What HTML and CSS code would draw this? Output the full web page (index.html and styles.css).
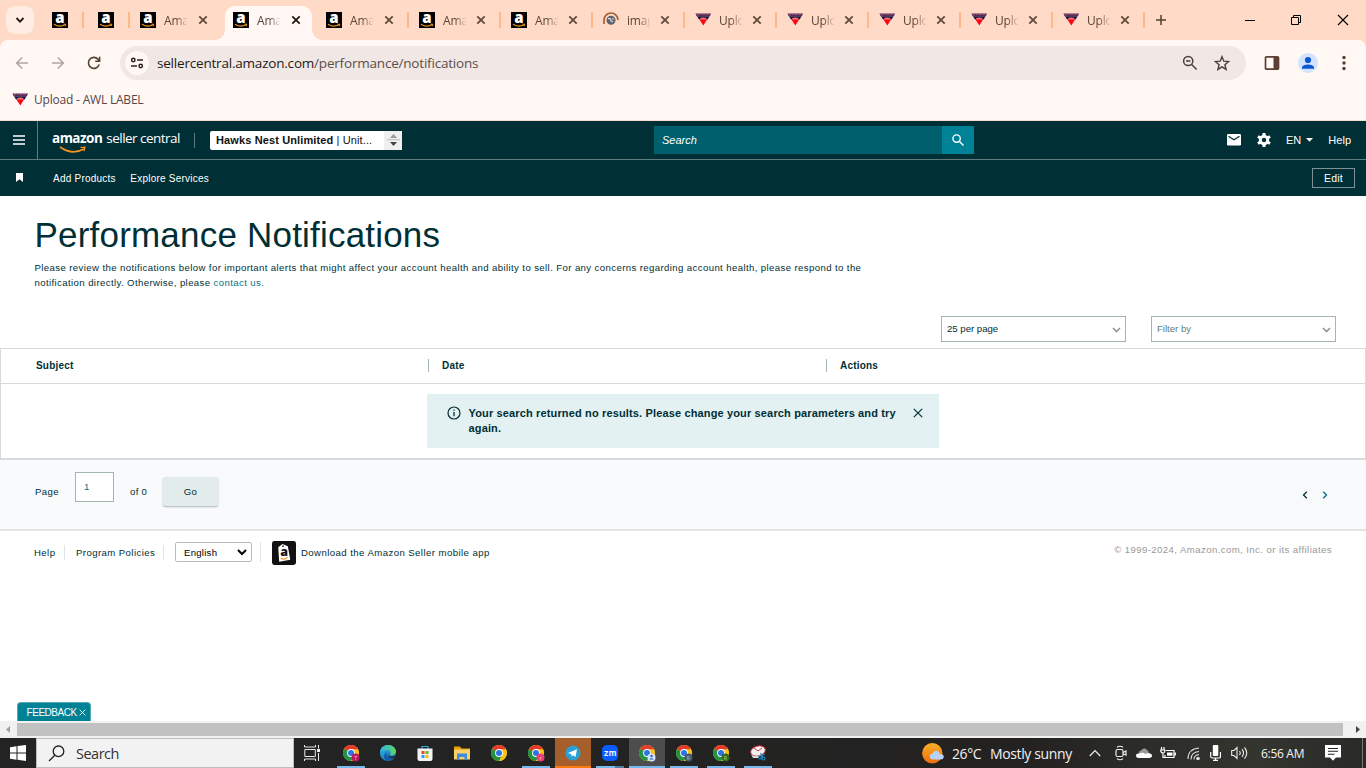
FILE: index.html
```
<!DOCTYPE html>
<html lang="en">
<head>
<meta charset="utf-8">
<title>Performance Notifications</title>
<link rel="stylesheet" href="styles.css">
</head>
<body>
<svg class="defs" aria-hidden="true">
  <defs>
    <linearGradient id="edgeBlue" x1="0" y1="0" x2="1" y2="1"><stop offset="0" stop-color="#35c1f1"/><stop offset="1" stop-color="#0c59a4"/></linearGradient>
    <linearGradient id="edgeGreen" x1="0" y1="0" x2="1" y2="0"><stop offset="0" stop-color="#2bb8e8"/><stop offset="1" stop-color="#5fd460"/></linearGradient>
    <linearGradient id="sun" x1="0" y1="0" x2="0" y2="1"><stop offset="0" stop-color="#f9b024"/><stop offset="1" stop-color="#ee6c12"/></linearGradient>
  </defs>
  <symbol id="amz" viewBox="0 0 16 16"><rect width="16" height="16" fill="#000"/><text x="3.3" y="11" font-family="Open Sans, sans-serif" font-weight="800" font-size="15" fill="#fff">a</text><path d="M2 12.2Q7.500 15.800 13 12.800" fill="none" stroke="#f79a1c" stroke-width="1.200"/><path d="M11.500 12.200h2.300l-.6 2" fill="none" stroke="#f79a1c"/></symbol>
  <symbol id="awl" viewBox="0 0 16 16"><path d="M.5 1.500h15.500l-1.200 2.700H1.700z" fill="#5c2a58"/><path d="M2 2.600h2m1-.4h2m1 .4h2m1-.4h3" stroke="#b9808a" stroke-width=".6"/><path d="M2 4.200h12.500l-1.800 3.200H4z" fill="#1c1440"/><path d="M5 6.200q3.300-1.500 6.500 0l-.5 2H5.600z" fill="#f5707a"/><path d="M4.500 7.400h7.600L8.300 13.500z" fill="#fb0714"/></symbol>
  <symbol id="close" viewBox="0 0 10 10"><path d="M1.300 1.300l7.400 7.400M8.700 1.300L1.300 8.700" fill="none" stroke="currentColor" stroke-width="1.800"/></symbol>
  <symbol id="chrome" viewBox="0 0 16 16"><circle cx="8" cy="8" r="8" fill="#fbc116"/><path d="M8 8L1.070 4A8 8 0 0 1 14.930 4z" fill="#e33b2e"/><path d="M8 8L1.070 4A8 8 0 0 0 8 16l3.500-6z" fill="#229342"/><path d="M8 4.300h6.900A8 8 0 0 1 8 16l3.300-6z" fill="#fbc116"/><circle cx="8" cy="8" r="3.900" fill="#fff"/><circle cx="8" cy="8" r="3" fill="#2a74e4"/></symbol>
</svg>

<header class="tabstrip">
  <div class="tab-search"><svg width="10" height="10" viewBox="0 0 10 10"><path d="M1.500 3l3.500 3.600L8.500 3" fill="none" stroke="#27180f" stroke-width="1.800"/></svg></div>
  <div class="pinned"><svg class="fav"><use href="#amz"/></svg></div>
  <div class="pinned"><svg class="fav"><use href="#amz"/></svg></div>
  <div class="tab wide plain"><svg class="fav"><use href="#amz"/></svg><span>Ama</span><svg class="x"><use href="#close"/></svg></div>
  <div class="tab wide active"><svg class="fav"><use href="#amz"/></svg><span>Ama</span><svg class="x"><use href="#close"/></svg></div>
  <div class="tab wide"><svg class="fav"><use href="#amz"/></svg><span>Ama</span><svg class="x"><use href="#close"/></svg></div>
  <div class="tab"><svg class="fav"><use href="#amz"/></svg><span>Ama</span><svg class="x"><use href="#close"/></svg></div>
  <div class="tab"><svg class="fav"><use href="#amz"/></svg><span>Ama</span><svg class="x"><use href="#close"/></svg></div>
  <div class="tab"><svg class="fav" viewBox="0 0 16 16"><path d="M1 12V8a7 7 0 0 1 14 0" fill="none" stroke="#a45f2e" stroke-width="1.700"/><circle cx="8" cy="8.200" r="4.500" fill="#5b6470"/><path d="M5 6.500l2.500.3.500 2 2 1M9.500 6l1 1.500" fill="none" stroke="#d9d5d3" stroke-width="1.300"/></svg><span>imag</span><svg class="x"><use href="#close"/></svg></div>
  <div class="tab"><svg class="fav"><use href="#awl"/></svg><span>Uplo</span><svg class="x"><use href="#close"/></svg></div>
  <div class="tab"><svg class="fav"><use href="#awl"/></svg><span>Uplo</span><svg class="x"><use href="#close"/></svg></div>
  <div class="tab"><svg class="fav"><use href="#awl"/></svg><span>Uplo</span><svg class="x"><use href="#close"/></svg></div>
  <div class="tab"><svg class="fav"><use href="#awl"/></svg><span>Uplo</span><svg class="x"><use href="#close"/></svg></div>
  <div class="tab"><svg class="fav"><use href="#awl"/></svg><span>Uplo</span><svg class="x"><use href="#close"/></svg></div>
  <svg class="new-tab" width="12" height="12" viewBox="0 0 12 12"><path d="M6 1v10M1 6h10" stroke="#54402f" stroke-width="1.500"/></svg>
  <div class="win-controls">
    <svg width="10" height="12" viewBox="0 0 10 12"><path d="M0 6.500h10" stroke="#000"/></svg>
    <svg width="12" height="12" viewBox="0 0 12 12"><path d="M1.500 3.500h7v7h-7zM3.500 3.500v-2h7v7h-2" fill="none" stroke="#000"/></svg>
    <svg width="12" height="12" viewBox="0 0 12 12"><path d="M1 1l10 10M11 1L1 11" stroke="#000" stroke-width="1.100"/></svg>
  </div>
</header>

<div class="bars-wrap">
<div class="chrome-bars">
  <div class="toolbar">
    <svg class="nav-icon dim" viewBox="0 0 14 14"><path d="M13 7H2M7.200 1.500L1.700 7l5.500 5.500"/></svg>
    <svg class="nav-icon dim" viewBox="0 0 14 14"><path d="M1 7h11M6.800 1.500L12.300 7l-5.500 5.500"/></svg>
    <svg class="nav-icon" viewBox="0 0 14 14"><path d="M12.200 8.400A5.500 5.500 0 1 1 11 3.200L12.500 4.800M12.600.8v4.400H8.200"/></svg>
    <div class="omnibox">
      <div class="site-info"><svg width="14" height="12" viewBox="0 0 14 12"><g fill="none" stroke="#2c211d" stroke-width="1.500"><circle cx="3.300" cy="3" r="1.700"/><path d="M7 3h6M1 9h6"/><circle cx="10.700" cy="9" r="1.700"/></g></svg></div>
      <p class="url"><span>sellercentral.amazon.com</span>/performance/notifications</p>
      <svg class="zoom" width="16" height="16" viewBox="0 0 16 16"><g fill="none" stroke="#4b3f3b" stroke-width="1.500"><circle cx="6.200" cy="6" r="4.600"/><path d="M9.600 9.500l5 5M4 6h4.400"/></g></svg>
      <svg class="star" width="16" height="16" viewBox="0 0 16 16"><path d="M8 1.700l1.800 4.500 4.800.4-3.700 3.100 1.200 4.700L8 11.900l-4.100 2.500 1.200-4.700L1.400 6.600l4.800-.4z" fill="none" stroke="#4b3f3b" stroke-width="1.400"/></svg>
    </div>
    <svg class="panel" width="16" height="16" viewBox="0 0 16 16"><rect x="1.500" y="1.800" width="13" height="12.400" rx="1" fill="none" stroke="#5b4033" stroke-width="1.700"/><path d="M9.500 2h5v12h-5z" fill="#5b4033"/></svg>
    <svg class="avatar" width="20" height="20" viewBox="0 0 20 20"><circle cx="10" cy="10" r="10" fill="#d3e3fd"/><circle cx="10" cy="7" r="3.100" fill="#0b57d0"/><path d="M4 15.700v-1.500Q5 11.500 10 11.500t6 2.700v1.500z" fill="#0b57d0"/></svg>
    <svg class="dots" width="4" height="16" viewBox="0 0 4 16" fill="#54402f"><circle cx="2" cy="2.500" r="1.700"/><circle cx="2" cy="8" r="1.700"/><circle cx="2" cy="13.500" r="1.700"/></svg>
  </div>
  <div class="bookmarks"><svg class="fav"><use href="#awl"/></svg><span>Upload - AWL LABEL</span></div>
</div>
</div>

<nav class="topnav">
  <div class="burger"><svg width="12" height="10" viewBox="0 0 12 10"><path d="M0 1h12M0 5h12M0 9h12" stroke="#fff" stroke-width="1.400"/></svg></div>
  <div class="brand"><b>amazon</b><span>seller central</span><svg class="smile" width="30" height="9" viewBox="0 0 30 9"><path d="M1 1Q13 9.500 25 3" fill="none" stroke="#f79321" stroke-width="1.600"/><path d="M21.500 1.500l4.500-.3-1 4" fill="none" stroke="#f79321" stroke-width="1.200"/></svg></div>
  <div class="account"><p><b>Hawks Nest Unlimited</b> | Unit...</p><div class="stepper"><svg width="13" height="12" viewBox="0 0 13 12"><path d="M3 4l3.500-4L10 4z" fill="#999"/><path d="M0 5.700h13" stroke="#bbb"/><path d="M3 8l3.500 4L10 8z" fill="#444"/></svg></div></div>
  <div class="search"><span>Search</span><div class="search-btn"><svg width="12" height="12" viewBox="0 0 12 12"><g fill="none" stroke="#fff" stroke-width="1.400"><circle cx="4.600" cy="4.600" r="3.700"/><path d="M7.300 7.300l4.200 4.200"/></g></svg></div></div>
  <svg class="mail" width="14" height="12" viewBox="0 0 14 12"><rect width="14" height="11.500" rx="1.200" fill="#fff"/><path d="M1.500 2.200L7 5.800l5.500-3.600" fill="none" stroke="#002f36" stroke-width="1.300"/></svg>
  <svg class="gear" width="14" height="14" viewBox="0 0 14 14"><circle cx="7" cy="7" r="3.700" fill="none" stroke="#fff" stroke-width="3"/><path d="M7 0v3M7 11v3M.9 3.500l2.700 1.500M10.400 9l2.700 1.500M.9 10.500L3.600 9M10.400 5l2.700-1.500" stroke="#fff" stroke-width="3"/></svg>
  <span class="lang">EN</span><svg class="caret" width="7" height="4" viewBox="0 0 7 4"><path d="M0 0h7L3.500 3.700z" fill="#fff"/></svg>
  <span class="help">Help</span>
</nav>
<nav class="subnav">
  <svg class="mark" width="7" height="9" viewBox="0 0 7 9"><path d="M0 0h7v9L3.500 6.300 0 9z" fill="#fff"/></svg>
  <span class="add">Add Products</span><span class="explore">Explore Services</span><button class="edit">Edit</button>
</nav>

<main>
  <h1>Performance Notifications</h1>
  <p class="intro">Please review the notifications below for important alerts that might affect your account health and ability to sell. For any concerns regarding account health, please respond to the<br>notification directly. Otherwise, please <a>contact us.</a></p>
  <div class="filters">
    <div class="drop"><span>25 per page</span><svg width="9" height="6" viewBox="0 0 9 6"><path d="M1 1l3.500 3.600L8 1" fill="none" stroke="#8a9696" stroke-width="1.500"/></svg></div>
    <div class="drop muted"><span>Filter by</span><svg width="9" height="6" viewBox="0 0 9 6"><path d="M1 1l3.500 3.600L8 1" fill="none" stroke="#8a9696" stroke-width="1.500"/></svg></div>
  </div>
  <section class="table">
    <div class="thead"><span>Subject</span><span>Date</span><span>Actions</span></div>
    <div class="tbody">
      <div class="alert">
        <svg width="14" height="14" viewBox="0 0 14 14"><circle cx="7" cy="7" r="6" fill="none" stroke="#002f36" stroke-width="1.200"/><path d="M7 6v4.300M7 3.500v1.300" stroke="#002f36" stroke-width="1.300"/></svg>
        <p>Your search returned no results. Please change your search parameters and try<br>again.</p>
        <svg class="dismiss" width="10" height="10" viewBox="0 0 10 10"><path d="M.8.8l8.400 8.400M9.200.8L.8 9.200" stroke="#002f36" stroke-width="1.200"/></svg>
      </div>
    </div>
  </section>
  <section class="pager">
    <span class="lbl">Page</span><div class="num">1</div><span class="of">of 0</span><button class="go">Go</button>
    <div class="arrows"><svg width="6" height="8" viewBox="0 0 6 8"><path d="M4.800.8L1.500 4l3.300 3.200" fill="none" stroke="#002f36" stroke-width="1.300"/></svg><svg width="6" height="8" viewBox="0 0 6 8"><path d="M1.200.8L4.500 4 1.200 7.200" fill="none" stroke="#006f82" stroke-width="1.300"/></svg></div>
  </section>
  <footer class="foot">
    <span class="f-help">Help</span><span class="f-policy">Program Policies</span>
    <div class="f-lang"><div class="select">English<svg width="10" height="7" viewBox="0 0 10 7"><path d="M1 1l4 4 4-4" fill="none" stroke="#000" stroke-width="2"/></svg></div></div>
    <svg class="app" width="24" height="24" viewBox="0 0 25 25"><rect width="25" height="25" rx="2.500" fill="#111"/><path d="M6.500 6.500L11 3l5.500 2.500L19 19.500 7.500 21.500z" fill="#fff"/><circle cx="11.500" cy="5.300" r=".9" fill="#111"/><text x="8.500" y="16" font-family="Open Sans, sans-serif" font-weight="800" font-size="13" fill="#111">a</text><path d="M9 18q4 2 7-1" stroke="#f7931e" fill="none" stroke-width="1.200"/></svg>
    <span class="f-app">Download the Amazon Seller mobile app</span>
    <small>© 1999-2024, Amazon.com, Inc. or its affiliates</small>
  </footer>
  <div class="feedback">FEEDBACK<svg width="7" height="7" viewBox="0 0 7 7"><path d="M.6.6l5.800 5.800M6.400.6L.6 6.400" stroke="#fff" stroke-width=".9"/></svg></div>
</main>

<div class="hscroll"><svg width="4" height="7" viewBox="0 0 4 7"><path d="M4 0v7L0 3.500z" fill="#a0a0a0"/></svg><div class="thumb"></div><svg width="4" height="7" viewBox="0 0 4 7"><path d="M0 0v7l4-3.500z" fill="#444"/></svg></div>

<div class="taskbar">
  <svg class="start" width="16" height="16" viewBox="0 0 16 16" fill="#fff"><path d="M0 2.200L6.500 1.300V7.500H0zM7.500 1.100L16 0v7.500H7.500zM0 8.500h6.500v6.200L0 13.800zM7.500 8.500H16V16l-8.500-1.200z"/></svg>
  <div class="tb-search"><svg width="17" height="17" viewBox="0 0 17 17"><g fill="none" stroke="#222" stroke-width="1.300"><circle cx="10.500" cy="6.300" r="5.300"/><path d="M6.800 10.200L1 16"/></g></svg><span>Search</span></div>
  <div class="task-view"><svg width="17" height="16" viewBox="0 0 17 16" fill="none" stroke="#e8e8e8"><path d="M.8 4.500h10.500v7H.8zM.5 0v2h11V0M.5 16v-2h11v2M14.500 0v3.500M14.500 8v8"/><path d="M13 5.500h3" stroke-width="3"/></svg></div>
  <div class="app-cell run"><svg viewBox="0 0 18 18"><use href="#chrome" width="16" height="16"/><circle cx="12.500" cy="12.500" r="4" fill="#b8195e"/><text x="11" y="14.600" font-family="Roboto" font-size="5.500" fill="#f5bdd3">T</text></svg></div>
  <div class="app-cell"><svg viewBox="0 0 16 16"><circle cx="8" cy="8" r="8" fill="url(#edgeBlue)"/><path d="M0 7C1 2 4 0 8 0c5 0 8 3.500 8 6.500 0 3-3 4.500-6 3.500 1.500-2 .5-5-3-5C4 5 1 6 0 7z" fill="url(#edgeGreen)"/><path d="M7 7.500c-2 4 2 6.500 7.500 5C12 16 7 17 4.500 13.500 3 11 4.500 8 7 7.500z" fill="#145ca8"/><path d="M8 8.200c-.6 1.300.2 2.500 2 3.200 2.500.6 4.500 0 5.500-.8l-.8 2C11 14 6.500 12 8 8.200z" fill="#202020"/></svg></div>
  <div class="app-cell"><svg viewBox="0 0 16 16"><path d="M5 4V1.500h6V4" fill="none" stroke="#2ba7de" stroke-width="1.200"/><path d="M.5 3.500h15V14q0 2-2 2h-11q-2 0-2-2z" fill="#f4f4f4"/><path d="M4.500 6h3v3h-3z" fill="#e64b25"/><path d="M8.500 6h3v3h-3z" fill="#71b51c"/><path d="M4.500 10h3v3h-3z" fill="#22a1ec"/><path d="M8.500 10h3v3h-3z" fill="#f7b60c"/></svg></div>
  <div class="app-cell"><svg viewBox="0 0 16 16"><path d="M0 1.500h6l1.500 2H16V8H0z" fill="#e5a20b"/><path d="M0 4.500h16v10H0z" fill="#fcd168"/><path d="M3 8.500h10V15h-2.500v-3h-5v3H3z" fill="#3b8ede"/></svg></div>
  <div class="app-cell"><svg viewBox="0 0 16 16"><use href="#chrome" width="16" height="16"/></svg></div>
  <div class="app-cell run"><svg viewBox="0 0 18 18"><use href="#chrome" width="16" height="16"/><circle cx="12.500" cy="12.500" r="4" fill="#e83e76"/><text x="11.500" y="14.500" font-family="Roboto" font-size="6" fill="#ffc5d8">r</text></svg></div>
  <div class="app-cell telegram"><svg viewBox="0 0 16 16"><circle cx="8" cy="8" r="7.500" fill="#2ba0d4"/><path d="M3 8l9-3.700L10.500 12 8 10.200 6.500 11.500 6.300 9.200z" fill="#fff"/></svg></div>
  <div class="app-cell run split"><svg viewBox="0 0 16 16"><rect width="16" height="16" rx="5" fill="#0b5cff"/><text x="1.800" y="10.600" font-family="Inter, sans-serif" font-size="8.500" font-weight="600" textLength="12.500" fill="#fff">zm</text></svg></div>
  <div class="app-cell run current"><svg viewBox="0 0 18 18"><use href="#chrome" width="16" height="16"/><circle cx="12.500" cy="12.500" r="4" fill="#d3e3fd"/><circle cx="12.500" cy="11" r="1.200" fill="#2864c4"/><path d="M10.300 14.500q2.200-3 4.400 0z" fill="#2864c4"/></svg></div>
  <div class="app-cell run"><svg viewBox="0 0 18 18"><use href="#chrome" width="16" height="16"/><circle cx="12.500" cy="12.500" r="4" fill="#455a64"/><text x="10.800" y="14.500" font-family="Roboto" font-size="5" fill="#a9bac2">R</text></svg></div>
  <div class="app-cell run"><svg viewBox="0 0 18 18"><use href="#chrome" width="16" height="16"/><circle cx="12.500" cy="12.500" r="4" fill="#33691e"/><text x="10.800" y="14.500" font-family="Roboto" font-size="5" fill="#a8cf93">R</text></svg></div>
  <div class="app-cell run"><svg viewBox="0 0 16 16"><ellipse cx="8" cy="6" rx="7.500" ry="5" transform="rotate(-15 8 6)" fill="#f5f1f0" stroke="#c82c35" stroke-width="1"/><path d="M8 6L4 3M8 6l4-3" stroke="#ce4249"/><path d="M1 9q4 4 9 1l-2 3H3z" fill="#e4e4e4"/><g fill="none" stroke="#2388c3" stroke-width="1.200"><circle cx="10" cy="12.500" r="1.500"/><circle cx="13.500" cy="13.500" r="1.500"/><path d="M10.500 11l4-2M13 12l-2.500-4"/></g></svg></div>
  <div class="tray">
    <svg class="weather" width="22" height="21" viewBox="0 0 22 21"><circle cx="10.300" cy="10.300" r="10.200" fill="url(#sun)"/><path d="M11 16.500a3 3 0 0 1-.2-6q.8-3.200 4-2.800 2.500.3 3 3.300 4.200.1 4 3-.3 2.500-3 2.500z" fill="#b9d2fa"/></svg>
    <span class="temp">26°C</span><span class="cond">Mostly sunny</span>
    <svg class="t1" width="12" height="8" viewBox="0 0 12 8"><path d="M.8 7L6 1.500 11.200 7" fill="none" stroke="#eee" stroke-width="1.200"/></svg>
    <svg class="t2" width="12" height="16" viewBox="0 0 12 16" fill="none" stroke="#eee" stroke-width="1.200"><rect x="1" y="4.500" width="7" height="7" rx="1.500"/><path d="M8 7.500l3-1.500v4L8 8.800M2 2.200Q5 .3 8 2.200M2 13.800q3 1.900 6 0"/></svg>
    <svg class="t3" width="16" height="10" viewBox="0 0 16 10"><path d="M3 6q-1-3 2-3.500Q8-1 11 2q2 1 2 4z" fill="#999"/><path d="M3 10q-3 0-3-2.500T3.500 5.500Q7 4 9.500 6 10.500 4.800 13 5.300q3 .5 3 2.500T13 10z" fill="#fff"/></svg>
    <svg class="t4" width="16" height="13" viewBox="0 0 16 13" fill="none" stroke="#fff" stroke-width="1.200"><path d="M6 3.500h8v7H5V8M1.500 0v3M4 0v3M.8 3h4v1.500Q4.500 6 3 6T.8 4.500zM3 6v4.500h3M15.300 5.500v3"/><path d="M7 5.500h5.500v3.200H7z" fill="#fff" stroke="none"/></svg>
    <svg class="t5" width="14" height="13" viewBox="0 0 14 13" fill="none" stroke="#ddd" stroke-width="1.100"><path d="M1 12Q1 2 12 1M4 12.500Q4 5 12 4.500M7 12.500Q7 8 12 7.500"/><circle cx="11" cy="11.500" r="1.200" fill="#fff"/></svg>
    <svg class="t6" width="11" height="16" viewBox="0 0 11 16"><rect x="2.800" width="5.500" height="11" rx="1" fill="#fff"/><path d="M.7 7v4.500q0 1.500 1.500 1.500H9q1.500 0 1.500-1.500V7M5.500 13v3M3 15.400h5" fill="none" stroke="#fff" stroke-width="1.200"/></svg>
    <svg class="t7" width="17" height="14" viewBox="0 0 17 14" fill="none" stroke="#eee" stroke-width="1.100"><path d="M.7 4.500H3l3-3v11l-3-3H.7zM8.500 5q1.500 2 0 4M11 3.200q3 3.800 0 7.600M13.500 1.300q4.500 5.700 0 11.400"/></svg>
    <span class="clock">6:56 AM</span>
    <svg class="t8" width="16" height="16" viewBox="0 0 16 16"><path d="M0 0h16v12.500h-5L8 15.800 5 12.500H0z" fill="#fff"/><path d="M3 3.500h10M3 6.300h10M3 9.200h6.500" stroke="#222" stroke-width="1.100"/></svg>
  </div>
</div>
</body>
</html>
```

FILE: styles.css
```
* { box-sizing: border-box; }
body { margin: 0; width: 1366px; height: 768px; overflow: hidden; display: flex; flex-direction: column; background: #fff; font-family: "Liberation Sans", Arial, sans-serif; color: #002f36; }
p, h1 { margin: 0; }
svg { display: block; flex: none; }
span, p { white-space: nowrap; }
button { font: inherit; letter-spacing: inherit; padding: 0; }
.defs { position: absolute; width: 0; height: 0; }
.fav { width: 16px; height: 16px; }

.tabstrip { height: 40px; flex: none; display: flex; align-items: center; background: #ffdac6; font: 12px "Open Sans", sans-serif; }
.tab-search { width: 28px; height: 28px; margin: 0 4px 0 6px; border-radius: 9px; background: #ffece3; display: grid; place-items: center; }
.pinned, .tab { display: flex; align-items: center; height: 40px; background: linear-gradient(#ffb78c, #ffb78c) right 12px / 2px 16px no-repeat; }
.pinned { width: 46px; padding-left: 14px; }
.tab { width: 92px; padding-left: 10px; color: #5a4436; }
.wide { width: 93px; }
.plain { background: none; }
.tab span { width: 23px; margin-left: 8px; letter-spacing: -.2px; mask-image: linear-gradient(90deg, #000 50%, transparent 105%); }
.tab .x { width: 10px; height: 10px; margin-left: 10px; color: #604a3d; }
.wide .x { margin-left: 11px; }
.active { position: relative; background: none; }
.active::before { content: ""; position: absolute; left: 2px; right: 4px; top: 6px; bottom: 0; border-radius: 10px 10px 0 0; background: #fff8f5; }
.active::after { content: ""; position: absolute; left: -8px; right: -6px; bottom: 0; height: 10px; background: radial-gradient(circle at 0 0, transparent 9.5px, #fff8f5 10px) left / 10px 10px no-repeat, radial-gradient(circle at 100% 0, transparent 9.5px, #fff8f5 10px) right / 10px 10px no-repeat; }
.active > * { position: relative; z-index: 1; }
.active .x { color: #27180f; }
.new-tab { margin-left: 10px; }
.win-controls { margin-left: auto; margin-right: 17px; display: flex; gap: 35px; align-items: center; }

.bars-wrap { flex: none; background: #ffdac6; }
.chrome-bars { height: 81px; background: #fff8f5; border-bottom: 1px solid #f6ddd2; border-radius: 8px 8px 0 0; }
.toolbar { display: flex; align-items: center; height: 46px; padding-left: 15px; }
.nav-icon { width: 14px; height: 14px; margin-right: 22px; fill: none; stroke: #54402f; stroke-width: 1.600; }
.nav-icon.dim { stroke: #b3a6a0; }
.omnibox { width: 1126px; height: 34px; margin-left: -3px; border-radius: 17px; background: #f1e7e4; display: flex; align-items: center; padding: 0 16px 0 5px; }
.site-info { width: 24px; height: 24px; border-radius: 50%; background: #fff8f5; display: grid; place-items: center; }
.url { flex: 1; margin-left: 8px; font: 13.500px "Open Sans", sans-serif; letter-spacing: -.2px; color: #5c4f4b; }
.url span { color: #1f1a18; }
.zoom { margin-right: 16px; }
.panel { margin-left: 18px; }
.avatar { margin-left: 18px; }
.dots { margin-left: 24px; }
.bookmarks { display: flex; align-items: center; gap: 6px; height: 27px; padding-left: 12px; font: 12px "Open Sans", sans-serif; letter-spacing: -.2px; color: #54464a; }

.topnav { height: 39px; flex: none; display: flex; align-items: center; background: #002f36; border-bottom: 1px solid #617c7f; color: #fff; font-size: 11px; }
.burger { width: 38px; height: 38px; border-right: 1px solid #617c7f; display: grid; place-items: center; }
.brand { position: relative; width: 157px; height: 15px; padding-left: 14px; border-right: 1px solid #617c7f; display: flex; gap: 4px; align-items: center; font: 13.500px "Open Sans", sans-serif; letter-spacing: -.52px; }
.brand b { font-weight: 700; }
.brand > * { margin-top: -4px; }
.brand .smile { position: absolute; left: 21px; top: 13px; margin: 0; }
.account { width: 192px; height: 19px; margin-left: 15px; background: #fff; border-radius: 2px; display: flex; justify-content: space-between; align-items: center; color: #111; padding-left: 6px; letter-spacing: .12px; }
.stepper { width: 18px; height: 19px; background: #efefef; display: grid; place-items: center; }
.search { width: 320px; height: 28px; margin-left: 252px; background: #005f6c; display: flex; justify-content: space-between; align-items: center; padding-left: 8px; font-style: italic; }
.search-btn { width: 32px; height: 28px; background: #008296; display: grid; place-items: center; }
.mail { margin-left: 253px; }
.gear { margin-left: 16px; }
.lang { margin-left: 15px; }
.caret { margin-left: 5px; }
.help { margin-left: 15px; letter-spacing: .1px; }
.subnav { height: 36px; flex: none; display: flex; align-items: center; background: #002f36; color: #fff; font-size: 10px; letter-spacing: .23px; }
.mark { margin-left: 16px; margin-top: -2px; }
.add { margin-left: 30px; }
.explore { margin-left: 14.500px; }
.edit { width: 43px; height: 20px; margin-left: auto; margin-right: 11px; margin-top: -1px; border: 1px solid #7d9294; background: none; color: #fff; font-size: 10.500px; }

main { flex: 1; display: flex; flex-direction: column; font-size: 9.600px; letter-spacing: .415px; }
h1 { height: 64px; padding: 19px 0 0 34.500px; font-size: 35px; line-height: 40px; font-weight: 400; letter-spacing: .2px; }
.intro { padding-left: 34.500px; line-height: 15px; height: 56px; letter-spacing: .392px; }
.intro a { color: #007587; }
.filters { height: 32px; padding-right: 30px; display: flex; justify-content: flex-end; gap: 25px; letter-spacing: 0; }
.drop { width: 185px; height: 26px; border: 1px solid #a2b5b5; padding: 0 4px 0 5px; display: flex; justify-content: space-between; align-items: center; }
.drop span { margin-top: -2px; }
.drop svg { margin-top: 2px; }
.muted { color: #667b7d; }
.table { height: 112px; border: 1px solid #d5dbdb; border-bottom: 2px solid #d5dbdb; }
.thead { height: 35px; border-bottom: 1px solid #d5dbdb; display: grid; grid-template-columns: 427px 398px 1fr; font-weight: 700; font-size: 10px; letter-spacing: .2px; }
.thead span { height: 13px; margin-top: 10px; padding-left: 13px; line-height: 13px; border-left: 1px solid #a2b5b5; }
.thead span:first-child { border: 0; padding-left: 35px; }
.tbody { padding: 10px 426px 0; }
.alert { width: 512px; height: 54px; background: #e3f1f2; display: flex; padding: 12px 16px 0 20px; font-size: 11px; font-weight: 700; line-height: 15px; letter-spacing: .145px; }
.alert p { margin-left: 7.500px; }
.dismiss { margin: 2px 0 0 auto; }
.pager { height: 71px; background: #f9fafb; border-bottom: 2px solid #e1e5e7; display: flex; padding-left: 35px; }
.lbl, .of { margin-top: 26px; }
.lbl { width: 40px; }
.num { width: 39px; height: 30px; margin: 12px 16px 0 0; border: 1px solid #a2b5b5; background: #fff; padding: 8px 8px; color: #007587; }
.of { width: 33px; letter-spacing: .3px; }
.go { width: 55px; height: 29px; margin-top: 17px; border: 0; border-radius: 2px; background: #e2eceb; color: #002f36; box-shadow: 0 1px 2px #aab5b5; }
.arrows { display: flex; gap: 14px; margin: 31px 38px 0 auto; }
.foot { height: 44px; display: flex; align-items: center; padding-left: 34px; }
.foot > span { height: 15px; line-height: 16px; margin-top: -1px; }
.f-help { width: 31px; border-right: 1px solid #dfe4e4; }
.f-policy { width: 99px; padding-left: 11px; border-right: 1px solid #dfe4e4; }
.f-lang { width: 97px; height: 20px; margin-top: -2px; padding-left: 11px; border-right: 1px solid #dfe4e4; }
.select { width: 77px; height: 20px; border: 1px solid #b7bdbd; border-radius: 2px; display: flex; align-items: center; justify-content: space-between; padding: 0 4px 0 8px; color: #000; letter-spacing: .25px; }
.app { margin-left: 11px; }
.f-app { margin-left: 5px; letter-spacing: .43px; }
.foot small { margin: -7px 34px 0 auto; font-size: 9.600px; color: #999; }
.feedback { width: 74px; height: 19px; margin: auto 0 0 16.500px; border: 1px solid #59a9b5; border-bottom: 0; border-radius: 4px 4px 0 0; background: #008296; color: #fff; display: flex; align-items: center; gap: 2px; padding-left: 9px; letter-spacing: -.45px; font-size: 10px; }

.hscroll { height: 17px; flex: none; background: #f1f1f1; display: flex; align-items: center; justify-content: space-between; padding: 0 6px; }
.thumb { width: 1326px; height: 13px; margin-right: 7px; background: #c1c1c1; }

.taskbar { height: 30px; flex: none; display: flex; align-items: center; background: linear-gradient(90deg, #242424, #232221 75%, #34352f 92%, #292a26); color: #f2f2f2; font: 14px "Open Sans", sans-serif; }
.start { margin-left: 10px; }
.tb-search { width: 258px; height: 30px; margin-left: 10px; background: #f2f2f2; border: 1px solid #bdbdbd; display: flex; align-items: center; gap: 11px; padding-left: 11px; color: #333; font-size: 14.500px; letter-spacing: -.5px; }
.task-view { width: 39px; padding-left: 10px; }
.app-cell { width: 36px; height: 30px; margin-right: 1px; display: grid; place-items: center; }
.app-cell > svg { width: 16px; height: 16px; }
.app-cell > svg[viewBox="0 0 18 18"] { width: 18px; height: 18px; margin-left: 2px; margin-top: 2px; }
.run { background: linear-gradient(#76b9ed, #76b9ed) 50% 100% / 28px 2px no-repeat; }
.telegram { background: linear-gradient(#a65f2b 28px, #ff7a0c 28px); }
.split { background: linear-gradient(90deg, #76b9ed 19px, #4e7b9e 19px) 50% 100% / 28px 2px no-repeat; }
.current { background: linear-gradient(#4d4d4d 28px, #76b9ed 28px); }
.tray { margin-left: auto; margin-right: 3px; height: 30px; border-right: 1px solid #777; display: flex; align-items: center; }
.temp { margin-left: 8px; width: 38px; letter-spacing: -.4px; }
.cond { width: 99px; letter-spacing: -.37px; }
.t2 { margin-left: 14px; }
.t3 { margin-left: 9px; }
.t4 { margin-left: 8px; }
.t5 { margin-left: 11px; }
.t6 { margin-left: 9px; }
.t7 { margin-left: 10px; }
.clock { margin-left: 13px; width: 64px; font-size: 12px; letter-spacing: -.3px; }
.t8 { margin-right: 21px; }
```
